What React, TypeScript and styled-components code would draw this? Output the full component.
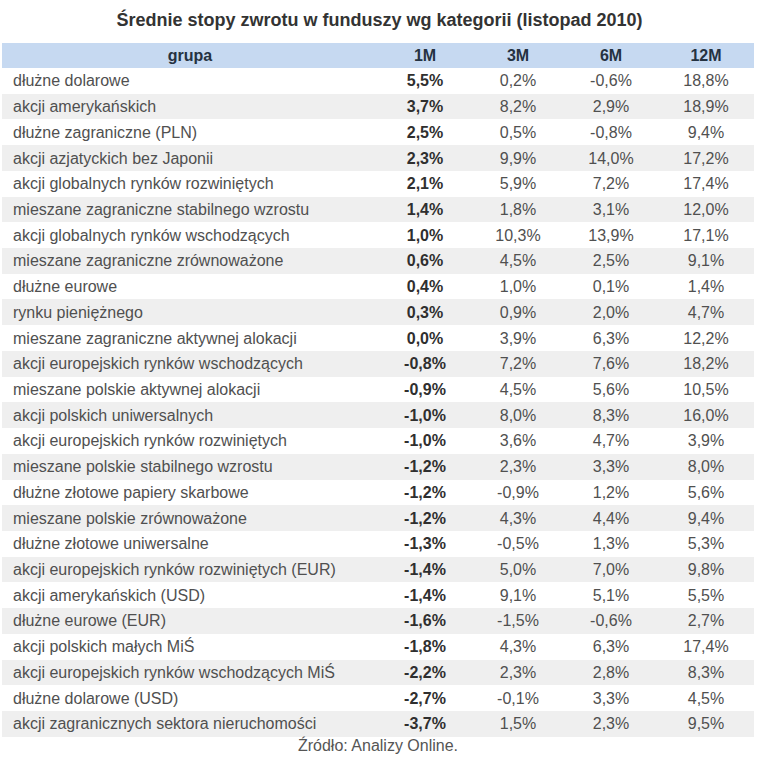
import styled, { createGlobalStyle } from "styled-components";

const GlobalStyle = createGlobalStyle`
  body {
    margin: 0;
    background: #ffffff;
    font-family: "Liberation Sans", Arial, sans-serif;
  }
`;

type Row = [string, string, string, string, string];

const rows: Row[] = [
  ["dłużne dolarowe", "5,5%", "0,2%", "-0,6%", "18,8%"],
  ["akcji amerykańskich", "3,7%", "8,2%", "2,9%", "18,9%"],
  ["dłużne zagraniczne (PLN)", "2,5%", "0,5%", "-0,8%", "9,4%"],
  ["akcji azjatyckich bez Japonii", "2,3%", "9,9%", "14,0%", "17,2%"],
  ["akcji globalnych rynków rozwiniętych", "2,1%", "5,9%", "7,2%", "17,4%"],
  ["mieszane zagraniczne stabilnego wzrostu", "1,4%", "1,8%", "3,1%", "12,0%"],
  ["akcji globalnych rynków wschodzących", "1,0%", "10,3%", "13,9%", "17,1%"],
  ["mieszane zagraniczne zrównoważone", "0,6%", "4,5%", "2,5%", "9,1%"],
  ["dłużne eurowe", "0,4%", "1,0%", "0,1%", "1,4%"],
  ["rynku pieniężnego", "0,3%", "0,9%", "2,0%", "4,7%"],
  ["mieszane zagraniczne aktywnej alokacji", "0,0%", "3,9%", "6,3%", "12,2%"],
  ["akcji europejskich rynków wschodzących", "-0,8%", "7,2%", "7,6%", "18,2%"],
  ["mieszane polskie aktywnej alokacji", "-0,9%", "4,5%", "5,6%", "10,5%"],
  ["akcji polskich uniwersalnych", "-1,0%", "8,0%", "8,3%", "16,0%"],
  ["akcji europejskich rynków rozwiniętych", "-1,0%", "3,6%", "4,7%", "3,9%"],
  ["mieszane polskie stabilnego wzrostu", "-1,2%", "2,3%", "3,3%", "8,0%"],
  ["dłużne złotowe papiery skarbowe", "-1,2%", "-0,9%", "1,2%", "5,6%"],
  ["mieszane polskie zrównoważone", "-1,2%", "4,3%", "4,4%", "9,4%"],
  ["dłużne złotowe uniwersalne", "-1,3%", "-0,5%", "1,3%", "5,3%"],
  ["akcji europejskich rynków rozwiniętych (EUR)", "-1,4%", "5,0%", "7,0%", "9,8%"],
  ["akcji amerykańskich (USD)", "-1,4%", "9,1%", "5,1%", "5,5%"],
  ["dłużne eurowe (EUR)", "-1,6%", "-1,5%", "-0,6%", "2,7%"],
  ["akcji polskich małych MiŚ", "-1,8%", "4,3%", "6,3%", "17,4%"],
  ["akcji europejskich rynków wschodzących MiŚ", "-2,2%", "2,3%", "2,8%", "8,3%"],
  ["dłużne dolarowe (USD)", "-2,7%", "-0,1%", "3,3%", "4,5%"],
  ["akcji zagranicznych sektora nieruchomości", "-3,7%", "1,5%", "2,3%", "9,5%"],
];

const Page = styled.div`
  width: 759px;
  height: 760px;
  padding: 9px 5px 0 2px;
  box-sizing: border-box;
  display: flex;
  flex-direction: column;
`;

const Title = styled.h1`
  margin: 0 0 0 3px;
  height: 34px;
  font-size: 18px;
  font-weight: bold;
  color: #333333;
  text-align: center;
  line-height: 22px;
`;

const Grid = styled.div`
  display: grid;
  grid-template-columns: 376px 94px 92px 94px 96px;
  width: 752px;
`;

const HeadCell = styled.div`
  height: 25px;
  background: #c6d9f1;
  color: #253241;
  font-size: 16px;
  font-weight: bold;
  display: flex;
  align-items: center;
  justify-content: center;
`;

const Cell = styled.div<{ $striped: boolean; $left?: boolean; $bold?: boolean }>`
  height: 25.73px;
  background: ${({ $striped }) => ($striped ? "#efefef" : "#ffffff")};
  color: ${({ $bold }) => ($bold ? "#2f2f2f" : "#505050")};
  font-size: 16px;
  font-weight: ${({ $bold }) => ($bold ? "bold" : "normal")};
  display: flex;
  align-items: center;
  justify-content: ${({ $left }) => ($left ? "flex-start" : "center")};
  padding-left: ${({ $left }) => ($left ? "11px" : "0")};
  padding-top: 1px;
  box-sizing: border-box;
  white-space: nowrap;
`;

const Source = styled.div`
  width: 752px;
  text-align: center;
  font-size: 16px;
  color: #555555;
`;

export default function App() {
  return (
    <>
      <GlobalStyle />
      <Page>
        <Title>Średnie stopy zwrotu w funduszy wg kategorii (listopad 2010)</Title>
        <Grid>
          <HeadCell>grupa</HeadCell>
          <HeadCell>1M</HeadCell>
          <HeadCell>3M</HeadCell>
          <HeadCell>6M</HeadCell>
          <HeadCell>12M</HeadCell>
          {rows.map((r, i) => {
            const striped = i % 2 === 1;
            return [
              <Cell key={`${i}-0`} $striped={striped} $left>
                {r[0]}
              </Cell>,
              <Cell key={`${i}-1`} $striped={striped} $bold>
                {r[1]}
              </Cell>,
              <Cell key={`${i}-2`} $striped={striped}>
                {r[2]}
              </Cell>,
              <Cell key={`${i}-3`} $striped={striped}>
                {r[3]}
              </Cell>,
              <Cell key={`${i}-4`} $striped={striped}>
                {r[4]}
              </Cell>,
            ];
          })}
        </Grid>
        <Source>Źródło: Analizy Online.</Source>
      </Page>
    </>
  );
}
